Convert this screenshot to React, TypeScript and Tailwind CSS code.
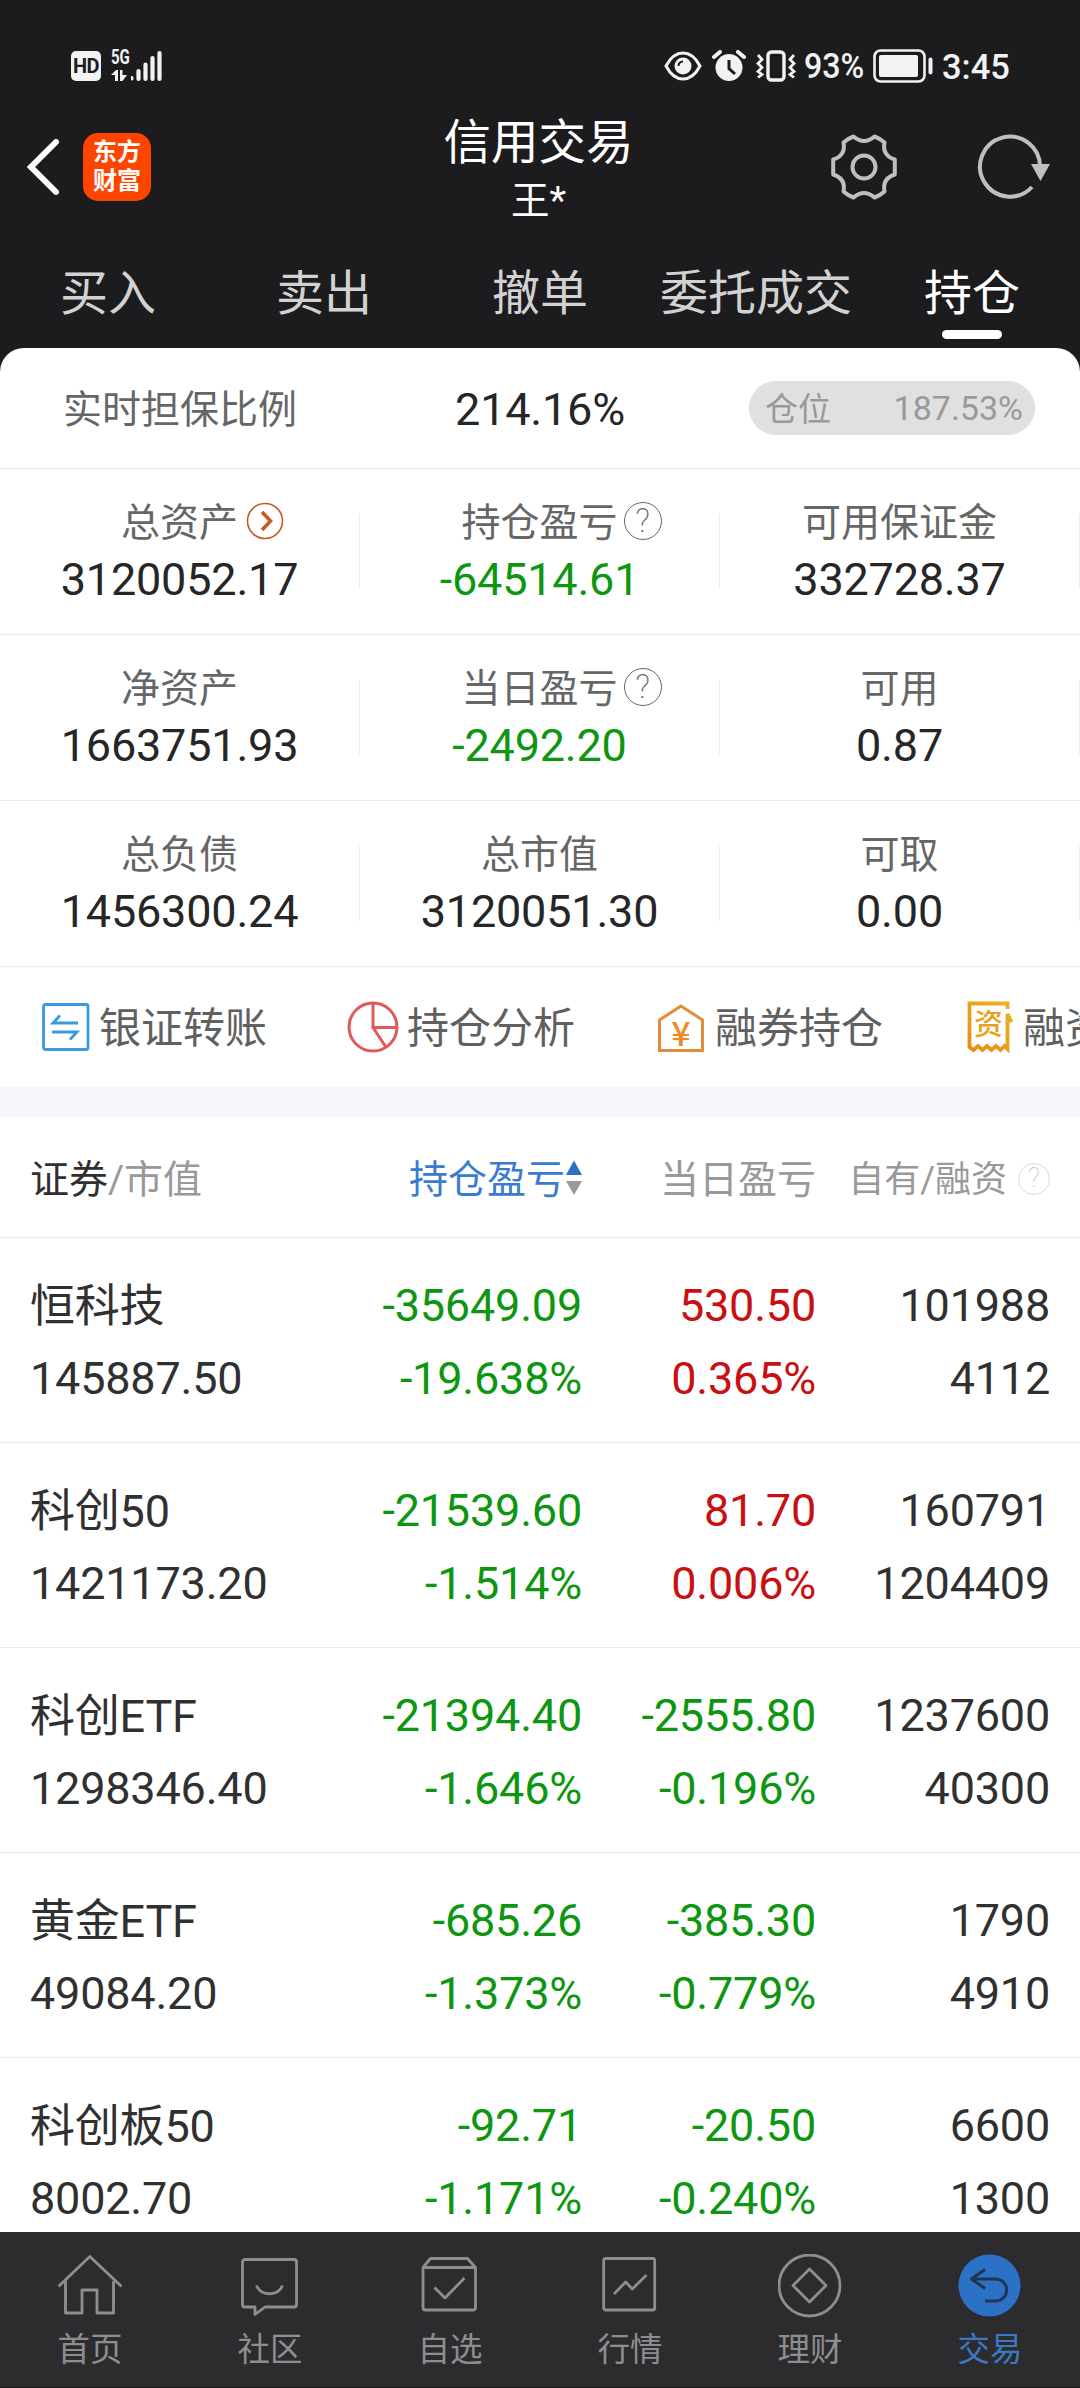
import type { ReactNode } from 'react';
import clsx from 'clsx';

type Metric = { label: string; value: string; tone?: 'down'; hint?: 'arrow' | 'question' };

type Holding = {
  name: string;
  marketValue: string;
  profit: string;
  profitRate: string;
  dayProfit: string;
  dayRate: string;
  own: string;
  financed: string;
};

const tabs = ['买入', '卖出', '撤单', '委托成交', '持仓'];

const metricRows: Metric[][] = [
  [
    { label: '总资产', value: '3120052.17', hint: 'arrow' },
    { label: '持仓盈亏', value: '-64514.61', tone: 'down', hint: 'question' },
    { label: '可用保证金', value: '332728.37' },
  ],
  [
    { label: '净资产', value: '1663751.93' },
    { label: '当日盈亏', value: '-2492.20', tone: 'down', hint: 'question' },
    { label: '可用', value: '0.87' },
  ],
  [
    { label: '总负债', value: '1456300.24' },
    { label: '总市值', value: '3120051.30' },
    { label: '可取', value: '0.00' },
  ],
];

const holdings: Holding[] = [
  { name: '恒科技', marketValue: '145887.50', profit: '-35649.09', profitRate: '-19.638%', dayProfit: '530.50', dayRate: '0.365%', own: '101988', financed: '4112' },
  { name: '科创50', marketValue: '1421173.20', profit: '-21539.60', profitRate: '-1.514%', dayProfit: '81.70', dayRate: '0.006%', own: '160791', financed: '1204409' },
  { name: '科创ETF', marketValue: '1298346.40', profit: '-21394.40', profitRate: '-1.646%', dayProfit: '-2555.80', dayRate: '-0.196%', own: '1237600', financed: '40300' },
  { name: '黄金ETF', marketValue: '49084.20', profit: '-685.26', profitRate: '-1.373%', dayProfit: '-385.30', dayRate: '-0.779%', own: '1790', financed: '4910' },
  { name: '科创板50', marketValue: '8002.70', profit: '-92.71', profitRate: '-1.171%', dayProfit: '-20.50', dayRate: '-0.240%', own: '6600', financed: '1300' },
];

function toneClass(value: string) {
  return value.startsWith('-') ? 'text-[#0d960f]' : 'text-[#c90f10]';
}

function StatusBar() {
  return (
    <div className="flex h-[100px] items-center pt-8 pr-[72px] pl-[71px] text-[#f2f2f2]">
      <div className="flex h-[30px] w-[30px] items-center justify-center rounded-[5px] bg-[#f2f2f2] text-[20px] leading-none font-bold tracking-[-0.5px] text-[#1c1c1e]">
        HD
      </div>
      <div className="ml-[10px] flex h-8 w-[20px] flex-col justify-between">
        <span className="origin-left scale-x-[0.75] text-[20px] leading-[15px] font-bold">5G</span>
        <svg className="h-[13px] w-[18px]" viewBox="0 0 18 13" fill="currentColor">
          <path d="M0 6 5 1h2v11H4V6ZM9 1h2.500v5H16l-4.500 6H9Z" />
        </svg>
      </div>
      <svg className="h-8 w-[34px]" viewBox="0 0 34 32" stroke="currentColor" strokeWidth="4.200" strokeLinecap="round">
        <path d="M0.500 28v0.500M7.500 21v8M14.500 14.500v14.500M21.500 8v21M28.500 3v26" />
      </svg>
      <div className="ml-auto flex items-center">
        <svg className="h-8 w-[38px]" viewBox="0 0 38 32" fill="none" stroke="currentColor" strokeWidth="3">
          <path d="M2 16C7 6.500 13 3 19 3s12 3.500 17 13c-5 9.500-11 13-17 13S7 25.500 2 16Z" />
          <circle cx="19" cy="16" r="8.500" fill="currentColor" stroke="none" />
          <path d="M14.500 16a4.500 4.500 0 0 1 4.500-4.500" stroke="#1c1c1e" strokeWidth="2" />
        </svg>
        <svg className="ml-[10px] h-8 w-[34px]" viewBox="0 0 34 32" fill="none" stroke="currentColor">
          <circle cx="17" cy="17.500" r="13.500" fill="currentColor" stroke="none" />
          <path d="m2 7 6-5M32 7l-6-5" strokeWidth="4" strokeLinecap="round" />
          <path d="M17 10v8.500l6 5.500" stroke="#1c1c1e" strokeWidth="3" />
        </svg>
        <svg className="ml-[10px] h-8 w-10" viewBox="0 0 40 32" fill="none" stroke="currentColor" strokeWidth="2.800">
          <rect x="12" y="2" width="16" height="28" rx="3.500" strokeWidth="3.400" />
          <path d="m2 5 4 4.500-4 4 4 4-4 4 4 3-4 3M38 5l-4 4.500 4 4-4 4 4 4-4 3 4 3" />
        </svg>
        <span className="ml-[8px] w-[62px] pt-[2px] text-[35px] leading-8 font-medium whitespace-nowrap">
          <span className="inline-block origin-left scale-x-[0.92]">93%</span>
        </span>
        <svg className="ml-[7px] h-[34px] w-[61px]" viewBox="0 0 61 34" fill="none" stroke="currentColor">
          <rect x="1.500" y="1.500" width="50" height="31" rx="6" strokeWidth="2.600" />
          <rect x="6" y="6" width="39" height="22" rx="2" fill="currentColor" stroke="none" />
          <path d="M57.500 10.500v13" strokeWidth="4" strokeLinecap="round" />
        </svg>
        <span className="ml-[8px] w-[66px] pt-[2px] text-[34.5px] leading-8 font-medium">3:45</span>
      </div>
    </div>
  );
}

function TitleBar() {
  return (
    <div className="grid h-[133px] grid-cols-[400px_1fr_400px]">
      <div className="flex items-center pl-[26px]">
        <svg className="h-14 w-[34px]" viewBox="0 0 34 56" fill="none" stroke="#fff" strokeWidth="6" strokeLinecap="round">
          <path d="M30 3 5 28l25 25" />
        </svg>
        <div className="ml-[23px] flex h-[68px] w-[68px] flex-col items-center justify-center rounded-[15px] bg-[#fe4500] text-[24px] leading-[29px] font-bold text-white">
          <span>东方</span>
          <span>财富</span>
        </div>
      </div>
      <div className="flex flex-col items-center pt-[11px] pr-[3px] text-white">
        <h1 className="text-[47.5px] leading-[64px]">信用交易</h1>
        <p className="text-[38.5px] leading-[52px]">王*</p>
      </div>
      <div className="flex items-center justify-end gap-[78px] pr-[30px]">
        <svg className="h-[68px] w-[68px]" viewBox="-34 -34 68 68" fill="none" stroke="#bfbfbf" strokeWidth="4" strokeLinejoin="round">
          <path d="M-10.500-30.500Q0-21.500 10.500-30.500 16-28.500 20.500-24.500 18-11.500 30.800-7.500V7.500Q18 11.500 20.500 24.500 16 28.500 10.500 30.500 0 21.500-10.500 30.500-16 28.500-20.500 24.500-18 11.500-30.800 7.500V-7.500Q-18-11.500-20.500-24.500-16-28.500-10.500-30.500Z" />
          <circle r="11.500" />
        </svg>
        <svg className="h-[68px] w-[74px]" viewBox="0 0 74 68" fill="none" stroke="#bfbfbf" strokeWidth="4">
          <path d="M56 54A30 30 0 1 1 64 34" />
          <path d="M55 31h19L64.500 48Z" fill="#bfbfbf" stroke="none" />
        </svg>
      </div>
    </div>
  );
}

function TabBar({ active }: { active: string }) {
  return (
    <nav className="grid h-[115px] grid-cols-5">
      {tabs.map((tab) => (
        <div
          key={tab}
          className={clsx('flex flex-col items-center pt-[29px] text-[48px] leading-[64px]', tab === active ? 'text-white' : 'text-[#d2d2d2]')}
        >
          {tab}
          {tab === active ? <span className="mt-[4px] h-[9px] w-[60px] rounded-full bg-white" /> : null}
        </div>
      ))}
    </nav>
  );
}

function QuestionMark({ className }: { className?: string }) {
  return <span className={clsx('flex items-center justify-center rounded-full font-extralight', className)}>?</span>;
}

function MetricCell({ metric }: { metric: Metric }) {
  return (
    <div className="flex h-full items-center">
      <div className="flex flex-1 flex-col items-center">
        <div className="relative text-[39px] leading-[56px] text-[#666]">
          {metric.label}
          {metric.hint === 'arrow' ? (
            <svg className="absolute top-[7px] left-full ml-[8px] h-[38px] w-[38px]" viewBox="0 0 38 38" fill="none" stroke="#c85a24">
              <circle cx="19" cy="19" r="17.500" strokeWidth="1.600" />
              <path d="m16 10 8.500 9-8.500 9" strokeWidth="3.600" />
            </svg>
          ) : null}
          {metric.hint === 'question' ? (
            <QuestionMark className="absolute top-[7px] left-full ml-[6px] h-[38px] w-[38px] border-[1.500px] border-[#666] text-[33px]" />
          ) : null}
        </div>
        <div className={clsx('text-[45px] leading-[58px] tracking-[-0.2px]', metric.tone === 'down' ? 'text-[#0d960f]' : 'text-[#262626]')}>
          {metric.value}
        </div>
      </div>
      <span className="h-[75px] w-px bg-[#ececec]" />
    </div>
  );
}

function Summary() {
  return (
    <section>
      <div className="flex h-[121px] items-center border-b border-[#ececec]">
        <div className="w-[360px] pt-[4px] pl-[63px] text-[39px] text-[#666]">实时担保比例</div>
        <div className="w-[360px] pt-[3px] text-center text-[45px] tracking-[-0.2px] text-[#262626]">214.16%</div>
        <div className="ml-[29px] flex h-[54px] w-[286px] items-center justify-between rounded-full bg-[#e0e0e0] pr-[12px] pl-4 text-[#999]">
          <span className="pt-[3px] text-[33px]">仓位</span>
          <span className="pt-px text-[34px]">187.53%</span>
        </div>
      </div>
      {metricRows.map((row) => (
        <div key={row[0].label} className="grid h-[166px] grid-cols-3 border-b border-[#ececec]">
          {row.map((metric) => (
            <MetricCell key={metric.label} metric={metric} />
          ))}
        </div>
      ))}
    </section>
  );
}

function Action({ icon, label }: { icon: ReactNode; label: string }) {
  return (
    <div className="flex w-[308px] shrink-0 items-center gap-2 text-[42px] whitespace-nowrap text-[#606060]">
      {icon}
      <span className="pt-[5px]">{label}</span>
    </div>
  );
}

function Actions() {
  return (
    <section className="flex h-[120px] shrink-0 overflow-hidden pl-[39px]">
      <Action
        label="银证转账"
        icon={
          <svg className="h-[52px] w-[52px] shrink-0" viewBox="0 0 52 52" fill="none" stroke="#3a9ade" strokeWidth="2.800">
            <rect x="4.500" y="3.500" width="44.500" height="45" rx="2" />
            <path d="M21 14.500 14 22h25M13 31h25l-7 7.500" />
          </svg>
        }
      />
      <Action
        label="持仓分析"
        icon={
          <svg className="h-[52px] w-[52px] shrink-0" viewBox="0 0 52 52" fill="none" stroke="#e05a5a" strokeWidth="3">
            <circle cx="26" cy="26" r="24" />
            <path d="M26 2v24.500h24M26 26.500 39.500 47" />
          </svg>
        }
      />
      <Action
        label="融券持仓"
        icon={
          <svg className="h-[52px] w-[52px] shrink-0 overflow-visible" viewBox="0 0 52 52" fill="none" stroke="#e28c3c" strokeWidth="3">
            <path d="M4.500 49.500V19L26 5l21.500 14v30.500Z" />
            <text x="26" y="45" textAnchor="middle" fontSize="34" fontFamily="Noto Sans CJK SC" fontWeight="500" fill="#f08a24" stroke="none">
              ¥
            </text>
          </svg>
        }
      />
      <Action
        label="融资"
        icon={
          <svg className="h-[52px] w-[52px] shrink-0" viewBox="0 0 52 52" fill="none">
            <defs>
              <linearGradient id="receipt" x1="0" y1="52" x2="52" y2="0" gradientUnits="userSpaceOnUse">
                <stop stopColor="#e58a14" />
                <stop offset="1" stopColor="#ecb822" />
              </linearGradient>
            </defs>
            <path
              d="M44.500 8V2.500H6.500V46l4 3 4.500-4 4.500 4 4.500-4 4.500 4 4.500-4 4.500 4 4-4 3 3V13l4 8"
              stroke="url(#receipt)"
              strokeWidth="3.800"
            />
            <text x="25.500" y="33.500" textAnchor="middle" fontSize="29" fontWeight="500" fill="#e8a01c">
              资
            </text>
          </svg>
        }
      />
    </section>
  );
}

function HoldingsHeader() {
  return (
    <div className="grid h-[121px] shrink-0 grid-cols-[318px_234px_234px_234px] items-center border-b border-[#ececec] px-[30px] pt-[6px] text-[39px] text-[#999]">
      <div>
        <span className="text-[#303030]">证券</span>/市值
      </div>
      <div className="flex items-center justify-end text-[#3a7bcd]">
        持仓盈亏
        <svg className="mb-[3px] ml-px h-9 w-4" viewBox="0 0 16 36">
          <path d="M8 0.500 16 15H0Z" fill="#2f6fc0" />
          <path d="M0 21h16L8 35Z" fill="#999" />
        </svg>
      </div>
      <div className="text-right">当日盈亏</div>
      <div className="flex items-center justify-end pt-px text-[36px] whitespace-nowrap">
        自有/融资
        <QuestionMark className="mb-[4px] ml-[11px] h-8 w-8 shrink-0 border border-[#ddd] text-[27px] text-[#ccc]" />
      </div>
    </div>
  );
}

function HoldingRow({ item }: { item: Holding }) {
  return (
    <div className="grid h-[205px] shrink-0 grid-cols-[318px_234px_234px_234px] border-b border-[#ececec] px-[30px] pt-[31px] text-[45px] leading-[73px] tracking-[-0.2px] text-[#303030]">
      <div>
        <div className="-mb-px pt-px">{item.name}</div>
        <div>{item.marketValue}</div>
      </div>
      <div className={clsx('text-right', toneClass(item.profit))}>
        <div>{item.profit}</div>
        <div>{item.profitRate}</div>
      </div>
      <div className={clsx('text-right', toneClass(item.dayProfit))}>
        <div>{item.dayProfit}</div>
        <div>{item.dayRate}</div>
      </div>
      <div className="text-right">
        <div>{item.own}</div>
        <div>{item.financed}</div>
      </div>
    </div>
  );
}

const navItems: { label: string; icon: ReactNode }[] = [
  { label: '首页', icon: <path d="M0.500 32.500 31.800 2.500 63.500 32.500M7.500 27v32H24V36h15v23h16.500V27" /> },
  {
    label: '社区',
    icon: (
      <>
        <path d="M7 5.500h49a2.500 2.500 0 0 1 2.500 2.500v42.500a2.500 2.500 0 0 1-2.500 2.500H27l-10 7.500V53H7a2.500 2.500 0 0 1-2.500-2.500V8A2.500 2.500 0 0 1 7 5.500Z" />
        <path d="M18.500 31.500C23 42.500 40 42.500 44.500 31.500" />
      </>
    ),
  },
  {
    label: '自选',
    icon: (
      <>
        <path d="M5 13.500 12.500 4.500h37l8 9v40a2.500 2.500 0 0 1-2.500 2.500H7.500A2.500 2.500 0 0 1 5 53.500ZM5 13.500h52.500" />
        <path d="m16.500 33.500 10.500 10.500L46.500 24" />
      </>
    ),
  },
  {
    label: '行情',
    icon: (
      <>
        <rect x="5.700" y="4.500" width="51" height="51.500" rx="2" />
        <path d="m16 40 11.700-12 6.600 7L48.500 21" />
      </>
    ),
  },
  {
    label: '理财',
    icon: (
      <>
        <circle cx="31.500" cy="31.500" r="30.500" />
        <path d="m31.500 15 16.500 16.500L31.500 48 15 31.500Z" />
      </>
    ),
  },
  {
    label: '交易',
    icon: (
      <>
        <circle cx="31.500" cy="31.500" r="31" fill="#2b72c6" stroke="none" />
        <path d="M27 15.500 13.500 25 27 34.500M13.500 25H37c15.500 0 15.500 22 0 22H27" stroke="#22344f" strokeWidth="3" />
      </>
    ),
  },
];

function BottomNav({ active }: { active: string }) {
  return (
    <nav className="grid h-[156px] shrink-0 grid-cols-6 border-b border-[#1f1a1c] bg-[#2c2c2e]">
      {navItems.map((item) => (
        <div
          key={item.label}
          className={clsx('flex flex-col items-center pt-[22px] text-[32.5px]', item.label === active ? 'text-[#3b79c2]' : 'text-[#8e8e91]')}
        >
          <svg className="h-16 w-16" viewBox="0 0 64 64" fill="none" stroke="currentColor" strokeWidth="2.800" strokeLinejoin="round">
            {item.icon}
          </svg>
          <span className="mt-[9px] leading-[46px]">{item.label}</span>
        </div>
      ))}
    </nav>
  );
}

export default function App() {
  return (
    <div
      lang="zh-CN"
      className="flex h-[2388px] w-[1080px] flex-col overflow-hidden bg-[#1c1c1e] font-['Roboto','Noto_Sans_CJK_SC',sans-serif] leading-[1.2]"
    >
      <header className="shrink-0">
        <StatusBar />
        <TitleBar />
        <TabBar active="持仓" />
      </header>
      <main className="flex min-h-0 flex-1 flex-col overflow-hidden rounded-t-[24px] bg-white">
        <Summary />
        <Actions />
        <div className="h-[30px] shrink-0 bg-[#f6f7fa]" />
        <HoldingsHeader />
        <div className="flex min-h-0 flex-1 flex-col overflow-hidden">
          {holdings.map((item) => (
            <HoldingRow key={item.name} item={item} />
          ))}
        </div>
      </main>
      <BottomNav active="交易" />
    </div>
  );
}
